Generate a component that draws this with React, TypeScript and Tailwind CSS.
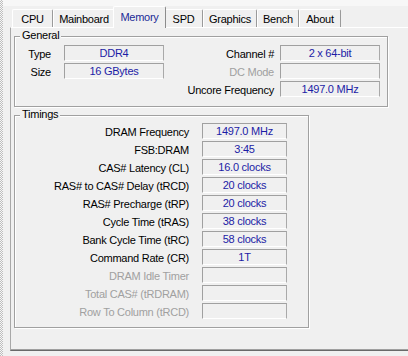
import React from "react";

const tabs = [
  { name: "CPU", w: "w-[41px]" },
  { name: "Mainboard", w: "w-[62px]" },
  { name: "Memory", w: "w-[53px]", active: true },
  { name: "SPD", w: "w-[39px]" },
  { name: "Graphics", w: "w-[54px]" },
  { name: "Bench", w: "w-[42px]" },
  { name: "About", w: "w-[42px]" },
];

function Field({ value, w }: { value?: string; w: string }) {
  return (
    <div
      className={`${w} h-[16px] shrink-0 border-t border-l border-r border-b border-t-[#a0a0a0] border-l-[#a0a0a0] border-r-[#a9a9a9] border-b-white text-center leading-[15px] text-[#1c1ca6] whitespace-nowrap`}
    >
      {value ?? ""}
    </div>
  );
}

function Label({ text, w, disabled }: { text: string; w: string; disabled?: boolean }) {
  return (
    <div
      className={`${w} h-[16px] shrink-0 text-right leading-[18px] whitespace-nowrap ${
        disabled ? "text-[#a0a0a0]" : "text-black"
      }`}
    >
      {text}
    </div>
  );
}

function GroupBox({
  title,
  className,
  children,
}: {
  title: string;
  className: string;
  children: React.ReactNode;
}) {
  return (
    <div
      className={`relative border border-[#a0a0a0] shadow-[inset_1px_1px_0_#fff,1px_1px_0_#fff] ${className}`}
    >
      <div className="absolute top-[-8px] left-[5px] px-[2px] bg-[#f0f0f0] leading-[13px] text-black">
        {title}
      </div>
      {children}
    </div>
  );
}

const timings: { label: string; value?: string; disabled?: boolean }[] = [
  { label: "DRAM Frequency", value: "1497.0 MHz" },
  { label: "FSB:DRAM", value: "3:45" },
  { label: "CAS# Latency (CL)", value: "16.0 clocks" },
  { label: "RAS# to CAS# Delay (tRCD)", value: "20 clocks" },
  { label: "RAS# Precharge (tRP)", value: "20 clocks" },
  { label: "Cycle Time (tRAS)", value: "38 clocks" },
  { label: "Bank Cycle Time (tRC)", value: "58 clocks" },
  { label: "Command Rate (CR)", value: "1T" },
  { label: "DRAM Idle Timer", disabled: true },
  { label: "Total CAS# (tRDRAM)", disabled: true },
  { label: "Row To Column (tRCD)", disabled: true },
];

export default function App() {
  return (
    <div className="w-[408px] h-[356px] bg-[#f0f0f0] flex overflow-hidden font-['Liberation_Sans',Arial,sans-serif] text-[11px] tracking-[-0.25px]">
      <div className="w-[3px] h-full shrink-0 bg-[repeating-conic-gradient(#bdbdbd_0_25%,#f6f6f6_0_50%)] bg-[length:2px_2px]" />
      <div className="ml-[7px] flex-1 flex flex-col">
        <div className="h-[6px] bg-[#f7f7f7] -ml-[7px]" />
        <div className="h-[21px] flex items-end pl-[2px]">
          {tabs.map((t) =>
            t.active ? (
              <div
                key={t.name}
                className={`${t.w} -mx-[2px] h-[22px] -mb-[1px] relative z-10 bg-[#f0f0f0] border-t border-l border-r border-t-white border-l-white border-r-[#8c8c8c] rounded-t-[2px] pt-[3px] text-center leading-[14px] text-[#1c2a96]`}
              >
                {t.name}
              </div>
            ) : (
              <div
                key={t.name}
                className={`${t.w} h-[18px] bg-[#f0f0f0] border-t border-l border-r border-t-white border-l-white border-r-[#9a9a9a] rounded-t-[2px] pt-[2px] text-center leading-[14px] text-black`}
              >
                {t.name}
              </div>
            )
          )}
        </div>
        <div className="h-[324px] border-t border-l border-b border-t-white border-l-[#a8a8a8] border-b-[#696969] shadow-[inset_0_-1px_0_#a0a0a0] flex flex-col">
          <GroupBox title="General" className="ml-[3px] mt-[8px] w-[374px] h-[71px] pt-[8px] flex flex-col gap-[2px]">
            <div className="flex h-[16px]">
              <Label text="Type" w="w-[36px]" />
              <div className="ml-[13px]">
                <Field value="DDR4" w="w-[100px]" />
              </div>
              <Label text="Channel #" w="w-[110px]" />
              <div className="ml-[6px]">
                <Field value="2 x 64-bit" w="w-[100px]" />
              </div>
            </div>
            <div className="flex h-[16px]">
              <Label text="Size" w="w-[36px]" />
              <div className="ml-[13px]">
                <Field value="16 GBytes" w="w-[100px]" />
              </div>
              <Label text="DC Mode" w="w-[110px]" disabled />
              <div className="ml-[6px]">
                <Field w="w-[100px]" />
              </div>
            </div>
            <div className="flex h-[16px]">
              <div className="w-[149px] shrink-0" />
              <Label text="Uncore Frequency" w="w-[110px]" />
              <div className="ml-[6px]">
                <Field value="1497.0 MHz" w="w-[100px]" />
              </div>
            </div>
          </GroupBox>
          <GroupBox title="Timings" className="ml-[3px] mt-[8px] w-[295px] h-[213px] pt-[7px] flex flex-col gap-[2px]">
            {timings.map((r) => (
              <div key={r.label} className="flex h-[16px]">
                <Label text={r.label} w="w-[174px]" disabled={r.disabled} />
                <div className="ml-[13px]">
                  <Field value={r.value} w="w-[85px]" />
                </div>
              </div>
            ))}
          </GroupBox>
        </div>
      </div>
    </div>
  );
}
